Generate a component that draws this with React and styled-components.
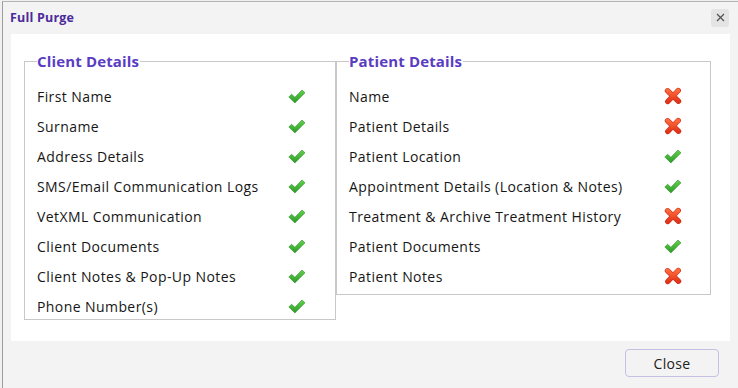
import React from "react";
import styled, { createGlobalStyle } from "styled-components";

const Global = createGlobalStyle`
  html, body { margin: 0; padding: 0; background: #f0f0f0; }
  body { font-family: "Open Sans", "Liberation Sans", sans-serif; }
  #root { width: 738px; height: 388px; overflow: hidden; }
`;

const Dialog = styled.div`
  box-sizing: border-box;
  margin: 1px 0 0 2px;
  width: 736px;
  height: 387px;
  background: #f3f3f3;
  border-left: 1px solid #9e9e9e;
  border-top: 1px solid #b4b4b4;
  display: flex;
  flex-direction: column;
`;

const TitleBar = styled.div`
  height: 32px;
  display: flex;
  align-items: center;
  justify-content: space-between;
  padding: 0 9px 0 7px;
`;

const Title = styled.div`
  font-family: "Open Sans", sans-serif;
  font-weight: 700;
  font-size: 12.5px;
  color: #4b2a9c;
  letter-spacing: 0.2px;
  margin-top: -2px;
`;

const XButton = styled.div`
  width: 18px;
  height: 18px;
  border-radius: 3px;
  background: #e4e4e4;
  display: flex;
  align-items: center;
  justify-content: center;
  margin-top: -1px;
`;

const Panel = styled.div`
  margin: 0 8px;
  height: 307px;
  background: #ffffff;
  display: flex;
  align-items: flex-start;
  padding: 0 0 0 13px;
  box-sizing: border-box;
`;

const Group = styled.fieldset`
  box-sizing: border-box;
  margin: 18px 0 0 0;
  width: ${(p) => p.$w}px;
  height: ${(p) => p.$h}px;
  border: 1px solid #c8c8c8;
  padding: 0 12px;
  display: flex;
  flex-direction: column;
`;

const Legend = styled.legend`
  padding: 0 1px 0 0;
  font-family: "Open Sans", sans-serif;
  font-weight: 700;
  font-size: 15px;
  line-height: 18px;
  color: #5a3cc2;
  letter-spacing: 0.15px;
`;

const Rows = styled.div`
  display: flex;
  flex-direction: column;
  gap: 6px;
  padding-top: 14px;
`;

const Row = styled.div`
  height: 24px;
  display: flex;
  align-items: center;
  justify-content: space-between;
  font-size: 14px;
  letter-spacing: 0.42px;
  color: #161616;
  padding-right: ${(p) => p.$pr}px;
`;

const Footer = styled.div`
  flex: 1;
  display: flex;
  justify-content: flex-end;
  align-items: flex-start;
  padding: 8px 19px 0 0;
`;

const CloseButton = styled.button`
  width: 94px;
  height: 28px;
  box-sizing: border-box;
  background: #f3f3f3;
  border: 1px solid #c6c0e4;
  border-radius: 4px;
  font-family: "Open Sans", sans-serif;
  font-size: 14px;
  letter-spacing: 0.3px;
  color: #222;
  padding: 0;
`;

const Check = () => (
  <svg width="18" height="15" viewBox="0 0 18 15">
    <defs>
      <linearGradient id="gc" x1="0" y1="0" x2="0" y2="1">
        <stop offset="0" stopColor="#62d24c" />
        <stop offset="1" stopColor="#2e9a29" />
      </linearGradient>
    </defs>
    <path
      d="M0.8 8 L3.6 5.3 L6.9 8.3 L14 1 L17 3.8 L6.9 13.9 Z"
      fill="url(#gc)"
      stroke="#2e8f28"
      strokeWidth="0.6"
      strokeLinejoin="round"
    />
  </svg>
);

const Cross = () => (
  <svg width="18" height="18" viewBox="0 0 18 18">
    <defs>
      <linearGradient id="gx" x1="0" y1="0" x2="0" y2="1">
        <stop offset="0" stopColor="#ff6a3d" />
        <stop offset="1" stopColor="#e23418" />
      </linearGradient>
    </defs>
    <path
      d="M3.5 3.8 L14.5 14.2 M14.2 3.5 L3.8 14.5"
      stroke="#c9301a"
      strokeWidth="5.4"
      strokeLinecap="round"
    />
    <path
      d="M3.5 3.8 L14.5 14.2 M14.2 3.5 L3.8 14.5"
      stroke="url(#gx)"
      strokeWidth="4.2"
      strokeLinecap="round"
    />
  </svg>
);

const clientItems = [
  "First Name",
  "Surname",
  "Address Details",
  "SMS/Email Communication Logs",
  "VetXML Communication",
  "Client Documents",
  "Client Notes & Pop-Up Notes",
  "Phone Number(s)",
];

const patientItems = [
  ["Name", false],
  ["Patient Details", false],
  ["Patient Location", true],
  ["Appointment Details (Location & Notes)", true],
  ["Treatment & Archive Treatment History", false],
  ["Patient Documents", true],
  ["Patient Notes", false],
];

export default function App() {
  return (
    <>
      <Global />
      <Dialog>
        <TitleBar>
          <Title>Full Purge</Title>
          <XButton>
            <svg width="9" height="9" viewBox="0 0 9 9">
              <path d="M1 1 L8 8 M8 1 L1 8" stroke="#555" strokeWidth="1.3" />
            </svg>
          </XButton>
        </TitleBar>
        <Panel>
          <Group $w={312} $h={268}>
            <Legend>Client Details</Legend>
            <Rows>
              {clientItems.map((t) => (
                <Row key={t} $pr={17}>
                  <span>{t}</span>
                  <Check />
                </Row>
              ))}
            </Rows>
          </Group>
          <Group $w={375} $h={243}>
            <Legend>Patient Details</Legend>
            <Rows>
              {patientItems.map(([t, ok]) => (
                <Row key={t} $pr={16}>
                  <span>{t}</span>
                  {ok ? <Check /> : <Cross />}
                </Row>
              ))}
            </Rows>
          </Group>
        </Panel>
        <Footer>
          <CloseButton>Close</CloseButton>
        </Footer>
      </Dialog>
    </>
  );
}
